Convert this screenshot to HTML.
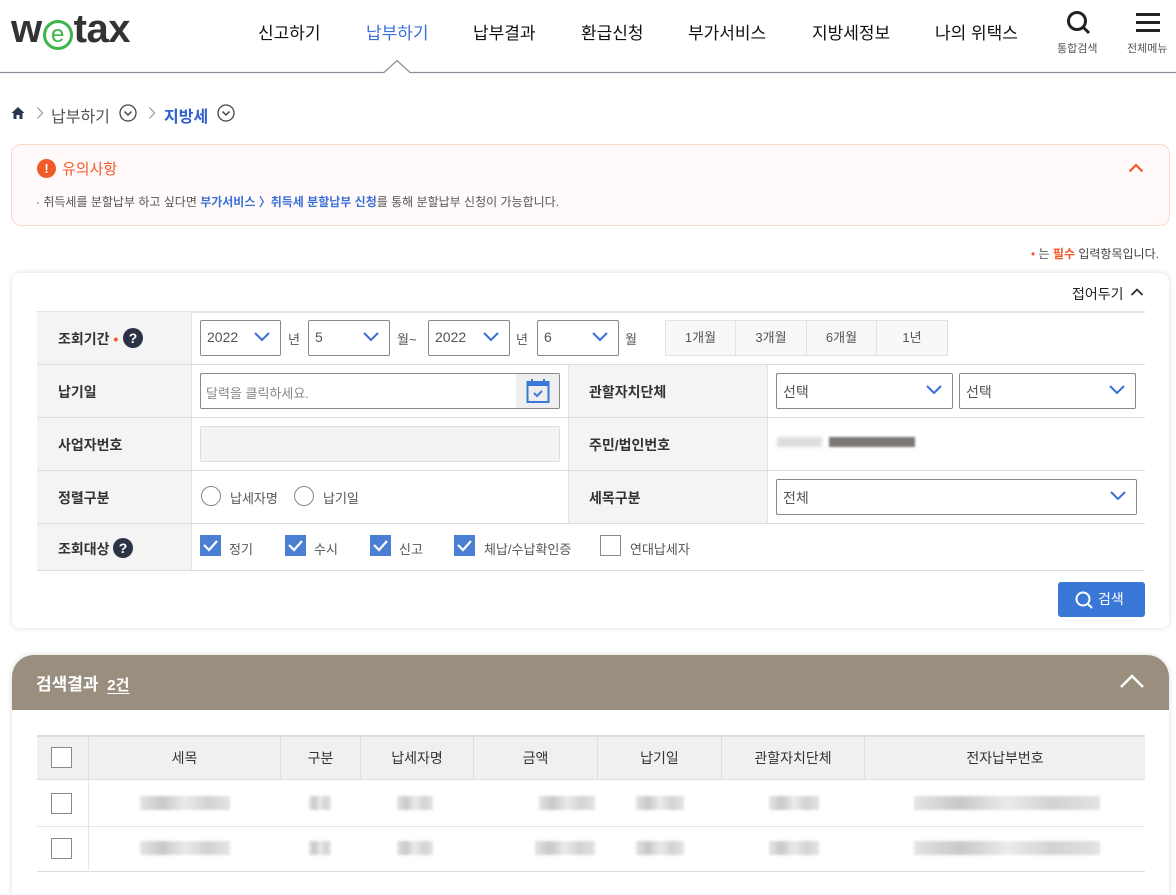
<!DOCTYPE html>
<html><head><meta charset="utf-8"><style>
*{box-sizing:border-box;margin:0;padding:0}
body{width:1176px;height:876px;overflow:hidden;background:#fff;font-family:"Liberation Sans","Noto Sans CJK KR",sans-serif;color:#222;position:relative}
.a{position:absolute}
.nav{font-size:17px;color:#111;top:19px}
.lbl{font-size:14px;font-weight:bold;color:#333}
.sel{position:absolute;border:1px solid #888;border-radius:2px;background:#fff;height:36px;font-size:14px;color:#555;padding:8px 6px}
.sel svg{position:absolute;right:10px;top:11px}
.cb{position:absolute;width:21px;height:21px;border:1px solid #888;background:#fff}
.cbc{position:absolute;width:21px;height:21px;background:#4a7fd3}
.rad{position:absolute;width:20px;height:20px;border:1px solid #888;border-radius:50%}
.t{font-size:13px;color:#555}
.bl{position:absolute;height:14px;background:linear-gradient(90deg,#ddd,#bbb,#e6e6e6,#c8c8c8,#ddd);filter:blur(1.2px);opacity:.8}
.hd{position:absolute;top:735px;height:45px;font-size:14px;color:#333;display:flex;align-items:center;justify-content:center;border-right:1px solid #ddd}
</style></head><body>
<!-- header -->
<div class="a" style="left:11px;top:7px;font-size:40px;line-height:44px;font-weight:bold;color:#333;letter-spacing:-0.5px;font-family:'Liberation Sans',sans-serif">w<span style="display:inline-block;width:30px;height:30px;border:3px solid #3cb54a;border-radius:50%;color:#3cb54a;font-size:24px;line-height:23px;text-align:center;vertical-align:0px;font-weight:normal;letter-spacing:0;margin:0 1px">e</span>tax</div>
<div class="a nav" style="left:258px">신고하기</div>
<div class="a nav" style="left:366px;color:#3a6fd8">납부하기</div>
<div class="a nav" style="left:473px">납부결과</div>
<div class="a nav" style="left:581px">환급신청</div>
<div class="a nav" style="left:688px">부가서비스</div>
<div class="a nav" style="left:812px">지방세정보</div>
<div class="a nav" style="left:935px">나의 위택스</div>
<svg class="a" style="left:1066px;top:10px" width="26" height="26" viewBox="0 0 26 26"><circle cx="11" cy="11" r="8.5" fill="none" stroke="#222" stroke-width="3"/><path d="M17 17l6 6" stroke="#222" stroke-width="3"/></svg>
<div class="a" style="left:1057px;top:40px;font-size:11px;color:#555">통합검색</div>
<svg class="a" style="left:1136px;top:13px" width="24" height="20"><rect y="0" width="24" height="3" fill="#222"/><rect y="8" width="24" height="3" fill="#222"/><rect y="16" width="24" height="3" fill="#222"/></svg>
<div class="a" style="left:1127px;top:40px;font-size:11px;color:#555">전체메뉴</div>
<svg class="a" style="left:0;top:60px" width="1176" height="14"><path d="M0 12.5H384L397 0.5L410 12.5H1176" fill="none" stroke="#8a8f9a" stroke-width="1.2"/></svg>
<!-- breadcrumb -->
<svg class="a" style="left:11px;top:106px" width="14" height="14" viewBox="0 0 14 14"><path d="M7 1L0.5 7H2.5V13H5.5V9H8.5V13H11.5V7H13.5Z" fill="#2a3550"/></svg>
<svg class="a" style="left:36px;top:106px" width="8" height="14"><path d="M1.5 1.5L6.5 7L1.5 12.5" fill="none" stroke="#999" stroke-width="1.2"/></svg>
<div class="a" style="left:51px;top:103px;font-size:16px;color:#555">납부하기</div>
<svg class="a" style="left:119px;top:104px" width="18" height="18"><circle cx="9" cy="9" r="8" fill="none" stroke="#444" stroke-width="1.3"/><path d="M5.5 7.5l3.5 3.5 3.5-3.5" fill="none" stroke="#444" stroke-width="1.5"/></svg>
<svg class="a" style="left:148px;top:106px" width="8" height="14"><path d="M1.5 1.5L6.5 7L1.5 12.5" fill="none" stroke="#999" stroke-width="1.2"/></svg>
<div class="a" style="left:164px;top:103px;font-size:16px;color:#2f5fd0;font-weight:bold">지방세</div>
<svg class="a" style="left:217px;top:104px" width="18" height="18"><circle cx="9" cy="9" r="8" fill="none" stroke="#444" stroke-width="1.3"/><path d="M5.5 7.5l3.5 3.5 3.5-3.5" fill="none" stroke="#444" stroke-width="1.5"/></svg>
<!-- notice -->
<div class="a" style="left:11px;top:144px;width:1159px;height:82px;background:#fffaf9;border:1px solid #fbd8cc;border-radius:10px"></div>
<div class="a" style="left:37px;top:159px;width:19px;height:19px;border-radius:50%;background:#f05a28;color:#fff;font-size:13px;font-weight:bold;text-align:center;line-height:19px">!</div>
<div class="a" style="left:62px;top:158px;font-size:15px;color:#f05a28">유의사항</div>
<svg class="a" style="left:1128px;top:162px" width="16" height="12"><path d="M1.5 9.5L8 3l6.5 6.5" fill="none" stroke="#f05a28" stroke-width="2.2"/></svg>
<div class="a" style="left:36px;top:193px;font-size:12px;color:#555">· 취득세를 분할납부 하고 싶다면 <b style="color:#3a6fd8">부가서비스 〉취득세 분할납부 신청</b>를 통해 분할납부 신청이 가능합니다.</div>
<div class="a" style="left:1031px;top:245px;font-size:12px;color:#444"><span style="color:#f05a28">•</span> 는 <b style="color:#f05a28">필수</b> 입력항목입니다.</div>
<!-- form card -->
<div class="a" style="left:12px;top:273px;width:1157px;height:355px;background:#fff;border-radius:8px;box-shadow:0 0 6px rgba(0,0,0,.15)"></div>
<div class="a" style="left:1072px;top:284px;font-size:14px;color:#222">접어두기</div>
<svg class="a" style="left:1130px;top:287px" width="14" height="10"><path d="M1.5 8L7 2.5 12.5 8" fill="none" stroke="#222" stroke-width="1.6"/></svg>
<div class="a" style="left:37px;top:311px;width:1108px;height:260px;border-top:2px solid #e3e3e3"></div>
<div class="a" style="left:37px;top:312px;width:154px;height:259px;background:#f4f4f4"></div>
<div class="a" style="left:568px;top:364px;width:200px;height:159px;background:#f4f4f4;border-left:1px solid #e3e3e3;border-right:1px solid #e3e3e3"></div>
<div class="a" style="left:191px;top:312px;width:1px;height:259px;background:#e3e3e3"></div>
<div class="a" style="left:37px;top:364px;width:1108px;height:1px;background:#ddd"></div>
<div class="a" style="left:37px;top:417px;width:1108px;height:1px;background:#ddd"></div>
<div class="a" style="left:37px;top:470px;width:1108px;height:1px;background:#ddd"></div>
<div class="a" style="left:37px;top:523px;width:1108px;height:1px;background:#ddd"></div>
<div class="a" style="left:37px;top:570px;width:1108px;height:1px;background:#ddd"></div>
<div class="a lbl" style="left:58px;top:329px">조회기간 <span style="color:#f05a28">•</span></div>
<div class="a" style="left:123px;top:328px;width:20px;height:20px;border-radius:50%;background:#2b3245;color:#fff;font-size:14px;font-weight:bold;text-align:center;line-height:20px">?</div>
<div class="a lbl" style="left:58px;top:382px">납기일</div>
<div class="a lbl" style="left:58px;top:435px">사업자번호</div>
<div class="a lbl" style="left:58px;top:488px">정렬구분</div>
<div class="a lbl" style="left:58px;top:539px">조회대상</div>
<div class="a" style="left:113px;top:538px;width:20px;height:20px;border-radius:50%;background:#2b3245;color:#fff;font-size:14px;font-weight:bold;text-align:center;line-height:20px">?</div>
<div class="a lbl" style="left:589px;top:382px">관할자치단체</div>
<div class="a lbl" style="left:589px;top:435px">주민/법인번호</div>
<div class="a lbl" style="left:589px;top:488px">세목구분</div>
<!-- row1 -->
<div class="sel" style="left:200px;top:320px;width:81px">2022<svg width="16" height="10"><path d="M1 1l7 7 7-7" fill="none" stroke="#3a6fd8" stroke-width="2"/></svg></div>
<div class="a t" style="left:288px;top:329px">년</div>
<div class="sel" style="left:308px;top:320px;width:82px">5<svg width="16" height="10"><path d="M1 1l7 7 7-7" fill="none" stroke="#3a6fd8" stroke-width="2"/></svg></div>
<div class="a t" style="left:397px;top:329px">월~</div>
<div class="sel" style="left:428px;top:320px;width:82px">2022<svg width="16" height="10"><path d="M1 1l7 7 7-7" fill="none" stroke="#3a6fd8" stroke-width="2"/></svg></div>
<div class="a t" style="left:516px;top:329px">년</div>
<div class="sel" style="left:537px;top:320px;width:82px">6<svg width="16" height="10"><path d="M1 1l7 7 7-7" fill="none" stroke="#3a6fd8" stroke-width="2"/></svg></div>
<div class="a t" style="left:625px;top:329px">월</div>
<div class="a" style="left:665px;top:320px;width:283px;height:36px;background:#f8f8f8;border:1px solid #e3e3e3;display:flex;font-size:13px;color:#555">
<div style="width:70px;text-align:center;line-height:34px;border-right:1px solid #e3e3e3">1개월</div><div style="width:71px;text-align:center;line-height:34px;border-right:1px solid #e3e3e3">3개월</div><div style="width:70px;text-align:center;line-height:34px;border-right:1px solid #e3e3e3">6개월</div><div style="flex:1;text-align:center;line-height:34px">1년</div></div>
<!-- row2 -->
<div class="a" style="left:200px;top:373px;width:360px;height:36px;border:1px solid #888;border-radius:2px;font-size:13px;color:#888;padding:9px 5px">달력을 클릭하세요.</div>
<div class="a" style="left:516px;top:374px;width:43px;height:34px;background:#eee"></div>
<svg class="a" style="left:526px;top:378px" width="24" height="26" viewBox="0 0 24 26"><rect x="1.5" y="4" width="21" height="20" fill="none" stroke="#3a78d8" stroke-width="2"/><rect x="1.5" y="4" width="21" height="4" fill="#3a78d8"/><path d="M6 1v5M18 1v5" stroke="#3a78d8" stroke-width="2"/><path d="M8 15l3 3 5-5" fill="none" stroke="#3a78d8" stroke-width="2"/></svg>
<div class="sel" style="left:776px;top:373px;width:177px">선택<svg width="16" height="10"><path d="M1 1l7 7 7-7" fill="none" stroke="#3a6fd8" stroke-width="2"/></svg></div>
<div class="sel" style="left:959px;top:373px;width:177px">선택<svg width="16" height="10"><path d="M1 1l7 7 7-7" fill="none" stroke="#3a6fd8" stroke-width="2"/></svg></div>
<!-- row3 -->
<div class="a" style="left:200px;top:426px;width:360px;height:36px;border:1px solid #ddd;border-radius:2px;background:#f3f3f3"></div>
<div class="a" style="left:777px;top:437px;width:45px;height:10px;background:#ddd;filter:blur(1.5px)"></div>
<div class="a" style="left:829px;top:437px;width:86px;height:10px;background:#7a7775;filter:blur(1px)"></div>
<!-- row4 -->
<div class="rad" style="left:201px;top:486px"></div><div class="a t" style="left:230px;top:488px">납세자명</div>
<div class="rad" style="left:294px;top:486px"></div><div class="a t" style="left:323px;top:488px">납기일</div>
<div class="sel" style="left:776px;top:479px;width:361px">전체<svg width="16" height="10"><path d="M1 1l7 7 7-7" fill="none" stroke="#3a6fd8" stroke-width="2"/></svg></div>
<!-- row5 -->
<div class="cbc" style="left:200px;top:535px"><svg width="21" height="21"><path d="M4 10l5 5 8-9" fill="none" stroke="#fff" stroke-width="2.2"/></svg></div><div class="a t" style="left:229px;top:539px">정기</div>
<div class="cbc" style="left:285px;top:535px"><svg width="21" height="21"><path d="M4 10l5 5 8-9" fill="none" stroke="#fff" stroke-width="2.2"/></svg></div><div class="a t" style="left:314px;top:539px">수시</div>
<div class="cbc" style="left:370px;top:535px"><svg width="21" height="21"><path d="M4 10l5 5 8-9" fill="none" stroke="#fff" stroke-width="2.2"/></svg></div><div class="a t" style="left:399px;top:539px">신고</div>
<div class="cbc" style="left:454px;top:535px"><svg width="21" height="21"><path d="M4 10l5 5 8-9" fill="none" stroke="#fff" stroke-width="2.2"/></svg></div><div class="a t" style="left:484px;top:539px">체납/수납확인증</div>
<div class="cb" style="left:600px;top:535px"></div><div class="a t" style="left:630px;top:539px">연대납세자</div>
<div class="a" style="left:1058px;top:582px;width:87px;height:35px;background:#3a78d8;border-radius:3px;color:#fff;font-size:14px;line-height:35px;padding-left:40px">검색</div>
<svg class="a" style="left:1074px;top:590px" width="20" height="20"><circle cx="9" cy="9" r="6.5" fill="none" stroke="#fff" stroke-width="2"/><path d="M13.5 13.5l4.5 4.5" stroke="#fff" stroke-width="2"/></svg>
<!-- results -->
<div class="a" style="left:12px;top:655px;width:1157px;height:240px;background:#fff;border-radius:22px 22px 0 0;box-shadow:0 0 6px rgba(0,0,0,.15);overflow:hidden"><div style="height:55px;background:#9a8f7e"></div></div>
<div class="a" style="left:36px;top:670px;font-size:17px;color:#fff;font-weight:bold">검색결과 <span style="font-size:15px;text-decoration:underline;text-underline-offset:3px;margin-left:4px">2건</span></div>
<svg class="a" style="left:1119px;top:673px" width="26" height="16"><path d="M2 14L13 3l11 11" fill="none" stroke="#fff" stroke-width="2.5"/></svg>
<div class="a" style="left:37px;top:735px;width:1108px;height:45px;background:#f0f0f0;border-top:2px solid #ddd;border-bottom:1px solid #ddd"></div>
<div class="hd" style="left:37px;width:52px"></div>
<div class="hd" style="left:89px;width:192px">세목</div>
<div class="hd" style="left:281px;width:80px">구분</div>
<div class="hd" style="left:361px;width:113px">납세자명</div>
<div class="hd" style="left:474px;width:124px">금액</div>
<div class="hd" style="left:598px;width:124px">납기일</div>
<div class="hd" style="left:722px;width:143px">관할자치단체</div>
<div class="hd" style="left:865px;width:280px;border-right:none">전자납부번호</div>
<div class="cb" style="left:51px;top:747px"></div>
<div class="cb" style="left:51px;top:793px"></div>
<div class="cb" style="left:51px;top:838px"></div>
<div class="a" style="left:37px;top:826px;width:1108px;height:1px;background:#e6e6e6"></div>
<div class="a" style="left:37px;top:871px;width:1108px;height:1px;background:#ddd"></div>
<div class="a" style="left:88px;top:780px;width:1px;height:92px;background:#e6e6e6"></div>
<div class="bl" style="left:140px;top:796px;width:90px"></div><div class="bl" style="left:140px;top:841px;width:90px"></div>
<div class="bl" style="left:309px;top:796px;width:22px"></div><div class="bl" style="left:309px;top:841px;width:22px"></div>
<div class="bl" style="left:397px;top:796px;width:36px"></div><div class="bl" style="left:397px;top:841px;width:36px"></div>
<div class="bl" style="left:539px;top:796px;width:56px"></div><div class="bl" style="left:535px;top:841px;width:60px"></div>
<div class="bl" style="left:636px;top:796px;width:48px"></div><div class="bl" style="left:636px;top:841px;width:48px"></div>
<div class="bl" style="left:769px;top:796px;width:50px"></div><div class="bl" style="left:769px;top:841px;width:50px"></div>
<div class="bl" style="left:914px;top:796px;width:186px"></div><div class="bl" style="left:914px;top:841px;width:186px"></div>
</body></html>
